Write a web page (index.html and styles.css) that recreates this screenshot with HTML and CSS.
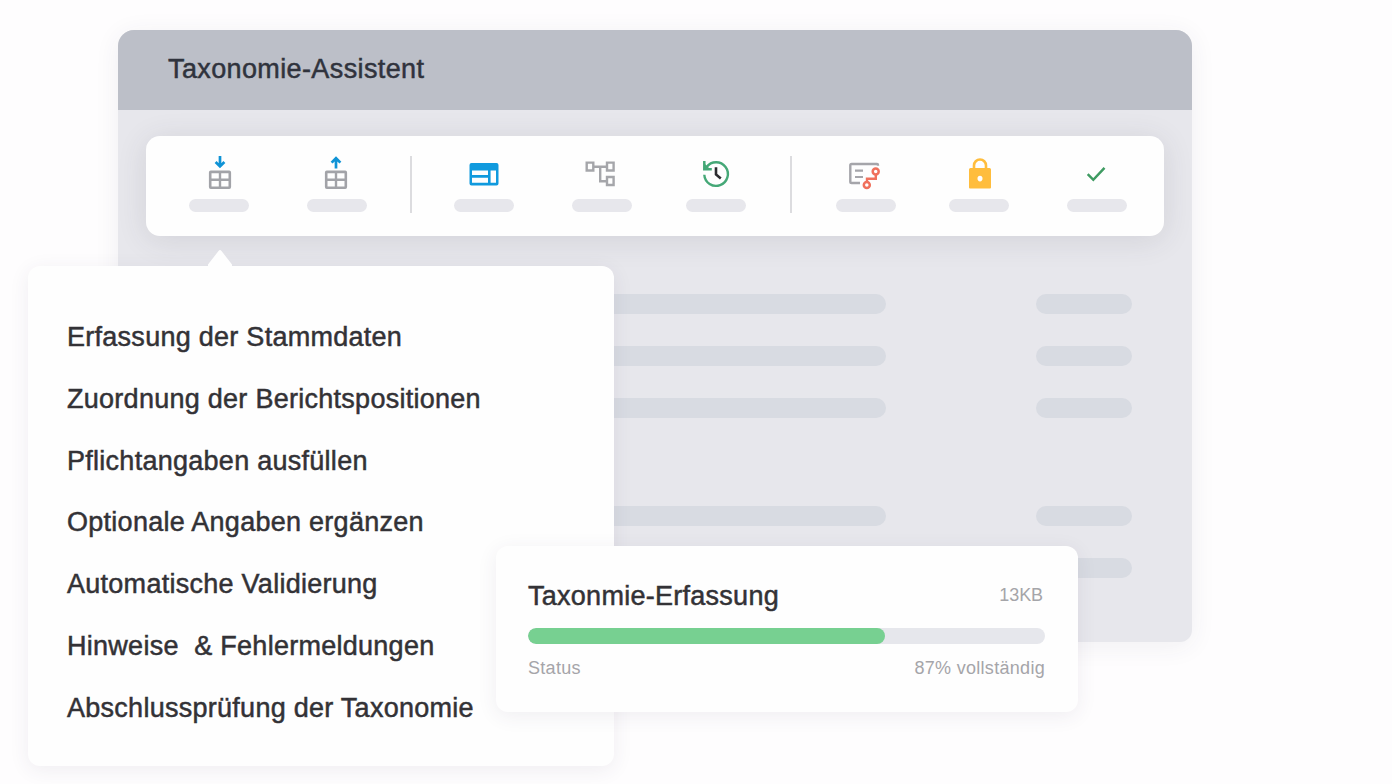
FILE: index.html
```html
<!DOCTYPE html>
<html lang="de">
<head>
    <meta charset="UTF-8">
    <meta name="viewport" content="width=device-width, initial-scale=1.0">
    <title>Taxonomie-Assistent</title>
    <link rel="stylesheet" href="styles.css">
</head>
<body>
    <main class="stage">
        <section class="window">
            <header class="titlebar">
                <h1>Taxonomie-Assistent</h1>
            </header>

            <nav class="toolbar">
                <div class="tool import">
                    <svg width="36" height="36" viewBox="0 0 36 36" fill="none">
                        <rect x="8.2" y="15.9" width="19.6" height="15.8" rx="0.6" stroke="#a2a3a8" stroke-width="2.6"/>
                        <path d="M18 16v16M8 23.8h20" stroke="#a2a3a8" stroke-width="2.4"/>
                        <path d="M18 0v10M13.6 6l4.4 4.4L22.4 6" stroke="#0f93d6" stroke-width="2.7"/>
                    </svg>
                    <span class="label"></span>
                </div>
                <div class="tool export">
                    <svg width="36" height="36" viewBox="0 0 36 36" fill="none">
                        <rect x="8.2" y="15.9" width="19.6" height="15.8" rx="0.6" stroke="#a2a3a8" stroke-width="2.6"/>
                        <path d="M18 16v16M8 23.8h20" stroke="#a2a3a8" stroke-width="2.4"/>
                        <path d="M18 12.500V3M13.6 6.600L18 2.200l4.4 4.400" stroke="#0f93d6" stroke-width="2.7"/>
                    </svg>
                    <span class="label"></span>
                </div>
                <span class="divider"></span>
                <div class="tool">
                    <svg width="36" height="36" viewBox="0 0 36 36">
                        <path fill="#109ade" fill-rule="evenodd" d="M5.5 7h25a2 2 0 0 1 2 2v18.500a2 2 0 0 1-2 2h-25a2 2 0 0 1-2-2V9a2 2 0 0 1 2-2zM6 14.500V19h16v-4.500zM6 21.800v5h16v-5zM24.600 14.500v12.300H30V14.500z"/>
                    </svg>
                    <span class="label"></span>
                </div>
                <div class="tool tree">
                    <svg width="36" height="36" viewBox="0 0 36 36" fill="none" stroke="#a5a6aa" stroke-width="2.4">
                        <path d="M4.700 6.600h6.600v7.900H4.700zM25 6.600h6.600v7.900H25zM25 21h6.600v8H25zM11.500 10.700H25M18.200 10.700v14.500H25"/>
                    </svg>
                    <span class="label"></span>
                </div>
                <div class="tool">
                    <svg width="36" height="36" viewBox="0 0 36 36" fill="none">
                        <path d="M6.300 18.700A11.800 11.800 0 1 0 8.600 11" stroke="#45a877" stroke-width="2.4"/>
                        <path d="M6.300 5v8.200h7.500" stroke="#45a877" stroke-width="2.5"/>
                        <path d="M6.500 7.500v5.500h5.500z" fill="#45a877"/>
                        <path d="M18 11.200v7.300l4.800 4" stroke="#2c2c30" stroke-width="2.6"/>
                    </svg>
                    <span class="label"></span>
                </div>
                <span class="divider"></span>
                <div class="tool mapping">
                    <svg width="36" height="36" viewBox="0 0 36 36" fill="none">
                        <path d="M32 9.800V9a1 1 0 0 0-1-1H5.600a1.300 1.300 0 0 0-1.300 1.300v16.400A1.300 1.300 0 0 0 5.600 27H14" stroke="#a5a5aa" stroke-width="2.4"/>
                        <path d="M9 14.700h8M9 21h8" stroke="#a5a5aa" stroke-width="2.2"/>
                        <path d="M29.800 18.400v4.300H21v3.400" stroke="#f0705c" stroke-width="2.4"/>
                        <circle cx="29.700" cy="15.400" r="3" stroke="#f0705c" stroke-width="2.5"/>
                        <circle cx="20.800" cy="29" r="3" stroke="#f0705c" stroke-width="2.5"/>
                    </svg>
                    <span class="label"></span>
                </div>
                <div class="tool lock">
                    <svg width="36" height="36" viewBox="0 0 36 36">
                        <path d="M12 14V9.500a6 6 0 0 1 12 0V14" fill="none" stroke="#ffbd3d" stroke-width="2.6"/>
                        <path fill="#ffbd3d" fill-rule="evenodd" d="M8.500 12h19a1.500 1.500 0 0 1 1.500 1.500v18a1 1 0 0 1-1 1H8a1 1 0 0 1-1-1v-18A1.500 1.500 0 0 1 8.500 12zM18 19.800a2.500 2.800 0 1 0 0 5.600 2.500 2.800 0 1 0 0-5.600z"/>
                    </svg>
                    <span class="label"></span>
                </div>
                <div class="tool check">
                    <svg width="36" height="36" viewBox="0 0 36 36" fill="none">
                        <path d="M9.700 18.200l5.600 5.600 11.200-12" stroke="#3f9b62" stroke-width="2.5"/>
                    </svg>
                    <span class="label"></span>
                </div>
            </nav>

            <div class="rows">
                <div class="row"><span class="bar"></span><span class="bar short"></span></div>
                <div class="row"><span class="bar"></span><span class="bar short"></span></div>
                <div class="row group-end"><span class="bar"></span><span class="bar short"></span></div>
                <div class="row"><span class="bar"></span><span class="bar short"></span></div>
                <div class="row"><span class="bar"></span><span class="bar short"></span></div>
            </div>
        </section>

        <section class="menu">
            <svg class="arrow" width="26" height="18" viewBox="0 0 26 18">
                <path d="M1 18v-2.500L11.500 2Q13 0 14.500 2L25 15.500V18z" fill="#fefefe"/>
            </svg>
            <ul>
                <li>Erfassung der Stammdaten</li>
                <li>Zuordnung der Berichtspositionen</li>
                <li>Pflichtangaben ausfüllen</li>
                <li>Optionale Angaben ergänzen</li>
                <li>Automatische Validierung</li>
                <li>Hinweise&nbsp; &amp; Fehlermeldungen</li>
                <li>Abschlussprüfung der Taxonomie</li>
            </ul>
        </section>

        <section class="status-card">
            <div class="line">
                <h2>Taxonmie-Erfassung</h2>
                <span class="size">13KB</span>
            </div>
            <div class="progress"><div class="progress-fill"></div></div>
            <div class="line meta">
                <span>Status</span>
                <span>87% vollständig</span>
            </div>
        </section>
    </main>
</body>
</html>
```
FILE: styles.css
```css
* {
    box-sizing: border-box;
}

body {
    margin: 0;
    background-color: #fefdfe;
    color: #333236;
    font-family: 'Liberation Sans', Arial, sans-serif;
}

h1, h2, ul {
    margin: 0;
    padding: 0;
}

h1, h2, li {
    font-size: 27px;
    font-weight: 400;
    letter-spacing: 0.27px;
    -webkit-text-stroke: 0.5px currentColor;
    white-space: nowrap;
}

.stage {
    position: relative;
    width: 1392px;
    height: 784px;
    padding: 30px 0 0 118px;
    overflow: hidden;
}

.window {
    width: 1074px;
    height: 612px;
    border-radius: 16px 16px 12px 12px;
    background-color: #e7e7ec;
    box-shadow: 0 4px 26px rgba(60, 50, 90, 0.07);
    overflow: hidden;
}

.titlebar {
    display: flex;
    align-items: center;
    height: 80px;
    padding: 0 0 2px 50px;
    background-color: #bcbfc8;
    color: #30333d;
}

.titlebar h1 {
    letter-spacing: 0.38px;
}

.toolbar {
    display: flex;
    width: 1018px;
    height: 100px;
    margin: 26px 0 0 28px;
    padding: 20px 10px 0 16px;
    border-radius: 14px;
    background-color: #fefefe;
    box-shadow: 0 4px 30px rgba(60, 55, 75, 0.12);
}

.tool {
    display: flex;
    flex-direction: column;
    align-items: center;
    width: 116px;
}

.tool svg {
    display: block;
}

.label {
    width: 60px;
    height: 13px;
    margin-top: 7px;
    border-radius: 6.5px;
    background-color: #e7e7ec;
}

/* the captions do not all sit centred under their icon */
.import .label,
.lock .label {
    margin-left: -3px;
}

.export .label,
.check .label {
    margin-left: 1px;
}

.tree .label {
    margin-left: 4px;
}

.mapping .label {
    margin-left: 3px;
}

.divider {
    width: 2px;
    height: 57px;
    margin: 0 14px 0 16px;
    background-color: #dcdcdf;
}

.rows {
    display: flex;
    flex-direction: column;
    gap: 32px;
    padding: 58px 60px 0 50px;
}

.row {
    display: flex;
    justify-content: space-between;
}

.group-end {
    margin-bottom: 56px;
}

.bar {
    width: 718px;
    height: 20px;
    border-radius: 10px;
    background-color: #d8dbe2;
}

.bar.short {
    width: 96px;
}

.menu {
    position: absolute;
    top: 266px;
    left: 28px;
    width: 586px;
    height: 500px;
    padding: 41px 39px 0;
    border-radius: 12px;
    background-color: #fefefe;
    box-shadow: 0 4px 20px rgba(60, 50, 90, 0.08);
}

.arrow {
    position: absolute;
    top: -17px;
    left: 179px;
}

.menu ul {
    list-style: none;
}

.menu li {
    line-height: 61.8px;
}

.status-card {
    position: absolute;
    top: 546px;
    left: 496px;
    width: 582px;
    height: 166px;
    padding: 32px 33px 0 32px;
    border-radius: 12px;
    background-color: #fefefe;
    box-shadow: 0 4px 20px rgba(60, 50, 90, 0.08);
}

.line {
    display: flex;
    align-items: center;
    justify-content: space-between;
    height: 36px;
}

.size,
.meta {
    color: #a5a5a9;
    font-size: 18px;
    letter-spacing: 0.3px;
}

.size {
    margin-right: 2px;
    padding-bottom: 2px;
    letter-spacing: -0.1px;
}

.progress {
    height: 16px;
    margin-top: 14px;
    border-radius: 8px;
    background-color: #e6e7ec;
    overflow: hidden;
}

.progress-fill {
    width: 69%;
    height: 100%;
    border-radius: 8px;
    background-color: #77d091;
}

.meta {
    margin-top: 6px;
}
```
